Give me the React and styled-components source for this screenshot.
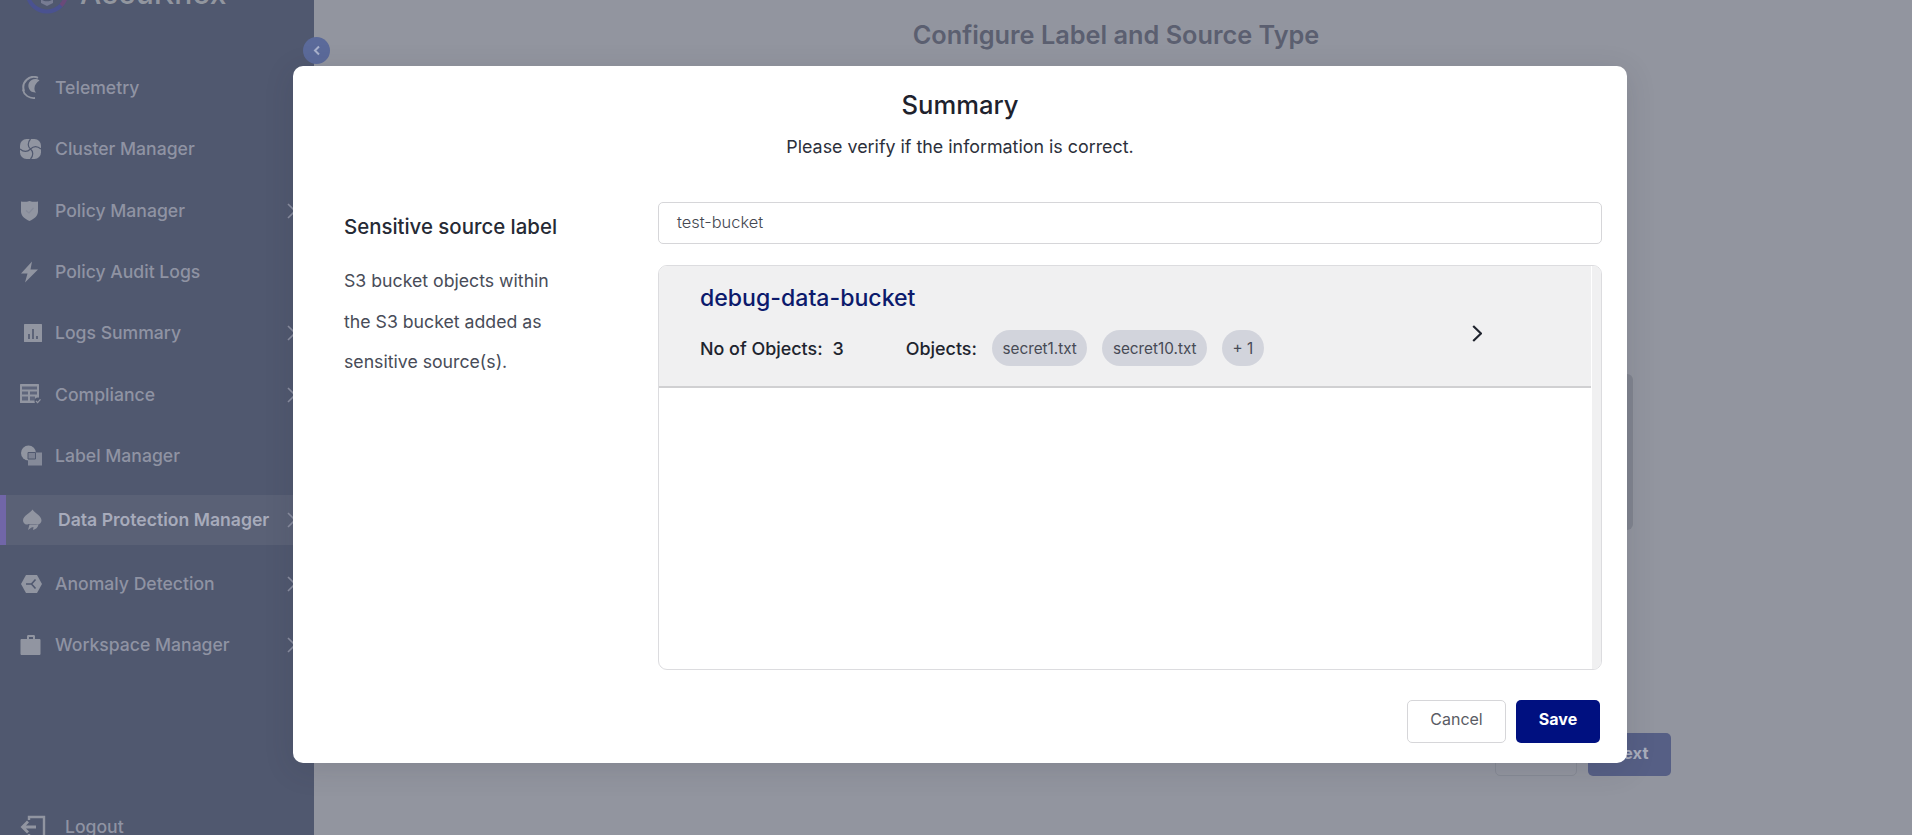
import React from "react";
import styled, { createGlobalStyle } from "styled-components";

const Global = createGlobalStyle`
  html, body { margin: 0; padding: 0; height: 100%; overflow: hidden; }
  body { font-family: Inter, "Noto Sans", sans-serif; background: #92959f; }
  * { box-sizing: border-box; }
`;

const Page = styled.div`
  display: flex;
  width: 100%;
  height: 835px;
  overflow: hidden;
  position: relative;
`;

const Sidebar = styled.aside`
  position: relative;
  flex: 0 0 314px;
  height: 835px;
  background: #50586f;
  display: flex;
  flex-direction: column;
  overflow: hidden;
`;

const Logo = styled.div`
  height: 57.4px;
  display: flex;
  align-items: flex-start;
  padding-left: 25px;
  overflow: hidden;
  flex: none;
`;

const LogoMark = styled.svg`
  width: 44px;
  height: 44px;
  flex: none;
  margin-top: -29px;
`;

const LogoText = styled.span`
  margin: -25px 0 0 11px;
  font-size: 30px;
  line-height: 36px;
  font-weight: 500;
  color: #92969f;
`;

const Row = styled.div`
  display: flex;
  align-items: center;
  flex: none;
  height: ${(p) => (p.$active ? "50px" : "61.3px")};
  margin: ${(p) => (p.$active ? "8.4px 0" : "0")};
  margin-top: ${(p) => (p.$bottom ? "121px" : undefined)};
  padding-left: ${(p) => (p.$active ? "14px" : "19px")};
  padding-right: 18px;
  background: ${(p) => (p.$active ? "#5a6176" : "transparent")};
  border-left: ${(p) => (p.$active ? "6px solid #7166a8" : "none")};
  color: ${(p) => (p.$active ? "#a7abbb" : "#8f93a3")};
`;

const Icon = styled.svg`
  width: 24px;
  height: 24px;
  flex: none;
  fill: #9195a1;
`;

const WideIcon = styled(Icon)`
  width: 27px;
`;

const Label = styled.span`
  font-size: 17.6px;
  line-height: 24px;
  font-weight: ${(p) => (p.$active ? 600 : 500)};
  margin-left: ${(p) => (p.$wide ? "19px" : p.$active ? "14px" : "12px")};
  white-space: nowrap;
`;

const Chevron = styled.svg`
  width: 9px;
  height: 16px;
  margin-left: auto;
  flex: none;
  fill: none;
  stroke: #8a8ea0;
  stroke-width: 1.6;
`;

const Collapse = styled.button`
  position: absolute;
  left: 303px;
  top: 37px;
  width: 27px;
  height: 27px;
  border: 0;
  padding: 0;
  border-radius: 50%;
  background: #5b6a9a;
  display: flex;
  align-items: center;
  justify-content: center;
  z-index: 2;
`;

const Main = styled.main`
  flex: 1;
  display: flex;
  flex-direction: column;
  background: #92959f;
`;

const PageTitle = styled.h1`
  margin: 20px 0 0;
  padding-left: 6px;
  font-size: 25.3px;
  line-height: 30px;
  font-weight: 600;
  color: #5b5f70;
  text-align: center;
`;

const Backdrop = styled.div`
  margin: 324px 279px 0 0;
  height: 156px;
  display: flex;
  justify-content: flex-end;
`;

const BehindCard = styled.div`
  width: 40px;
  background: #80848f;
  border-radius: 0 6px 6px 0;
`;

const Steps = styled.div`
  margin-top: 203px;
  padding-right: 241px;
  display: flex;
  justify-content: flex-end;
  gap: 11px;
`;

const StepBack = styled.div`
  width: 82px;
  height: 43px;
  border: 1px solid #868a95;
  border-radius: 5px;
`;

const StepNext = styled.div`
  width: 83px;
  height: 43px;
  padding-bottom: 4px;
  border-radius: 5px;
  background: #565f85;
  color: #a9adbc;
  font-size: 16.5px;
  font-weight: 700;
  display: flex;
  align-items: center;
  justify-content: center;
`;

const Overlay = styled.div`
  position: absolute;
  inset: 0;
  z-index: 5;
  padding: 66px 0 0 293px;
`;

const Modal = styled.section`
  width: 1334px;
  height: 697px;
  background: #fff;
  border-radius: 10px;
  box-shadow: 0 6px 30px rgba(40, 44, 60, 0.14);
  padding-top: 24px;
  display: flex;
  flex-direction: column;
`;

const ModalHead = styled.header`
  text-align: center;
`;

const ModalTitle = styled.h2`
  margin: 0;
  font-size: 25.6px;
  line-height: 30px;
  font-weight: 500;
  color: #1e222d;
`;

const ModalSub = styled.p`
  margin: 15px 0 0;
  font-size: 17.85px;
  line-height: 24px;
  color: #2c303b;
`;

const ModalBody = styled.div`
  margin-top: 43px;
  padding-right: 25px;
  display: grid;
  grid-template-columns: 365px 944px;
`;

const Intro = styled.div`
  padding: 10px 0 0 51px;
`;

const IntroTitle = styled.h3`
  margin: 0;
  font-size: 20.4px;
  line-height: 30px;
  font-weight: 500;
  color: #262a35;
`;

const IntroText = styled.p`
  margin: 19px 0 0;
  width: 215px;
  font-size: 17.7px;
  line-height: 40.7px;
  font-weight: 400;
  color: #484c58;
`;

const Fields = styled.div`
  display: flex;
  flex-direction: column;
  gap: 21px;
`;

const TextField = styled.div`
  height: 42px;
  padding: 0 0 2px 18px;
  border: 1.5px solid #d6d6d9;
  border-radius: 5px;
  display: flex;
  align-items: center;
  font-size: 16.4px;
  font-weight: 300;
  color: #454852;
`;

const ListBox = styled.div`
  height: 405px;
  border: 1px solid #dcdcdf;
  border-radius: 9px;
  display: flex;
  overflow: hidden;
`;

const List = styled.div`
  flex: 1;
`;

const Track = styled.div`
  width: 9px;
  margin-left: 1px;
  background: #f0f0f1;
`;

const Item = styled.div`
  height: 122px;
  background: #f0f0f1;
  border-bottom: 2px solid #d0d0d2;
  padding: 17px 108px 0 41px;
  display: flex;
`;

const ItemInfo = styled.div`
  flex: 1;
`;

const ItemName = styled.div`
  font-size: 23.1px;
  line-height: 30px;
  font-weight: 500;
  color: #0c1a6c;
`;

const Meta = styled.div`
  margin-top: 17px;
  height: 36px;
  display: flex;
  align-items: center;
  font-size: 17.9px;
  font-weight: 500;
  color: #20242e;
`;

const MetaValue = styled.span`
  margin-left: 10px;
  margin-right: 62px;
`;

const Chips = styled.div`
  display: flex;
  gap: 15px;
  margin-left: 15px;
`;

const Chip = styled.span`
  height: 36px;
  padding: 0 10.500px;
  border-radius: 18px;
  background: #d2d4dc;
  display: flex;
  align-items: center;
  font-size: 15.3px;
  font-weight: 400;
  color: #474a55;
`;

const ItemArrow = styled.svg`
  width: 10px;
  height: 17px;
  flex: none;
  margin: 42px 1px 0 -1px;
  fill: none;
  stroke: #20242e;
  stroke-width: 2.2;
`;

const ModalFoot = styled.footer`
  margin-top: 30px;
  padding-right: 27px;
  display: flex;
  justify-content: flex-end;
  gap: 10px;
`;

const Button = styled.button`
  height: 43px;
  width: ${(p) => (p.$primary ? "84px" : "99px")};
  padding: 0 0 5px;
  border-radius: 5px;
  border: ${(p) => (p.$primary ? "0" : "1px solid #d6d6d9")};
  background: ${(p) => (p.$primary ? "#001080" : "#fff")};
  color: ${(p) => (p.$primary ? "#fff" : "#5a5c64")};
  font-family: inherit;
  font-size: 16px;
  font-weight: ${(p) => (p.$primary ? 700 : 400)};
`;

const icons = {
  telemetry: (
    <>
      <path d="M20.500 4.500A6.800 6.800 0 1 0 17 16.500c-1-1-1.700-2.500-1.500-4.500.1-3 2-5.500 5-7.500Z" />
      <path d="M19 1.800A10.500 10.500 0 0 0 5 15" fill="none" stroke="#9195a1" strokeWidth="2" />
      <path d="M3.800 13.500A11 11 0 0 0 16 22" fill="none" stroke="#9195a1" strokeWidth="1.800" />
    </>
  ),
  cluster: (
    <>
      <rect x="1" y="2" width="21" height="20" rx="6.500" />
      <path d="M11.500 12C8.500 9.500 8.500 5.500 11.500 2M11.500 12c3-3 7-3 10.500 0M11.500 12c3 2.500 3 6.500 0 10M11.500 12c-3 3-7 3-10.500 0" fill="none" stroke="#50586f" strokeWidth="1.200" />
    </>
  ),
  shield: (
    <>
      <path d="M2 2.500c3 .5 5.500.5 8.500-.5 3 1 6 1 8.500.5v10c0 4.500-4 7.500-8.500 9.500C6 20 2 17 2 12.500Z" />
      <path d="M7 11.500l3 2.500 4.500-5" fill="none" stroke="#858a99" strokeWidth="1.200" />
    </>
  ),
  bolt: <path d="M13 1.500 2 13.500h6.500L6 22.500 19 9.500h-7.500Z" />,
  bars: (
    <>
      <rect x="5" y="3" width="18" height="18" rx="0.500" />
      <path d="M10 18v-5M14 18V8M18 18v-3" stroke="#50586f" strokeWidth="1.600" fill="none" />
    </>
  ),
  table: (
    <>
      <rect x="1" y="1" width="19" height="19" rx="0.500" />
      <path d="M3 3.500h15v3H3ZM3 8.500h6v3H3ZM11 8.500h7v3h-7ZM3 13.500h6v4H3ZM11 13.500h5v4h-5Z" fill="#5f667c" />
      <circle cx="19" cy="18" r="3.500" fill="#50586f" />
      <path d="M17 18l1.600 1.600 2.900-3.200" fill="none" stroke="#9195a1" strokeWidth="1.300" />
    </>
  ),
  label: (
    <>
      <circle cx="9.500" cy="9" r="7.500" />
      <rect x="9" y="8.500" width="14" height="13" fill="#858a99" />
      <path d="M9 8.500h7.500V15H9Z" fill="#7c8192" stroke="#50586f" strokeWidth="1" />
    </>
  ),
  spade: (
    <>
      <path d="M12.500 1.500c2 3.500 9 6 9 11 0 3-3 4.800-5.800 3.500H8.500C6 17.500 3 15.500 3 12.500c0-5 7.500-7.500 9.500-11Z" />
      <path d="M8 22l1.500-5.500h9c-.5 3-3 5-5.500 5.500l.5-3-2 .5Z" />
    </>
  ),
  hex: (
    <>
      <path d="M7 3h11l5 9-5 9H7l-5-9Z" />
      <path d="M12.500 12l4-4.500M12.500 12l4 4.500M12.500 12H7" stroke="#50586f" strokeWidth="1.600" fill="none" />
    </>
  ),
  briefcase: <path d="M8 3.500c0-1 .5-1.500 1.500-1.500h5c1 0 1.500.5 1.500 1.500V6h4.500c.5 0 1 .5 1 1v14c0 .5-.5 1-1 1h-18c-.5 0-1-.5-1-1V7c0-.5.5-1 1-1H8Zm2 .5v2h4V4Z" />,
};

const nav = [
  { name: "Telemetry", icon: "telemetry" },
  { name: "Cluster Manager", icon: "cluster" },
  { name: "Policy Manager", icon: "shield", more: true },
  { name: "Policy Audit Logs", icon: "bolt" },
  { name: "Logs Summary", icon: "bars", more: true },
  { name: "Compliance", icon: "table", more: true },
  { name: "Label Manager", icon: "label" },
  { name: "Data Protection Manager", icon: "spade", more: true, active: true },
  { name: "Anomaly Detection", icon: "hex", more: true },
  { name: "Workspace Manager", icon: "briefcase", more: true },
];

const App = () => (
  <Page>
    <Global />
    <Sidebar>
      <Logo>
        <LogoMark viewBox="0 0 44 44">
          <circle cx="22" cy="21" r="19.500" fill="none" stroke="#4a5290" strokeWidth="4" />
          <path d="M41.500 21A19.500 19.500 0 0 1 36 34.500" fill="none" stroke="#6a4a78" strokeWidth="4" />
          <path d="M16 28c2 3 10 3 12 0v4l-6 3-6-3Z" fill="#777c93" />
        </LogoMark>
        <LogoText>AccuKnox</LogoText>
      </Logo>
      {nav.map((n) => (
        <Row key={n.name} $active={n.active}>
          <Icon viewBox="0 0 24 24">{icons[n.icon]}</Icon>
          <Label $active={n.active}>{n.name}</Label>
          {n.more && (
            <Chevron viewBox="0 0 9 16">
              <path d="M1 1l7 7-7 7" />
            </Chevron>
          )}
        </Row>
      ))}
      <Row $bottom>
        <WideIcon viewBox="0 0 27 24">
          <path d="M10 5V2h15v20H10v-3" fill="none" stroke="#9195a1" strokeWidth="2.400" />
          <path d="M17 12H5M9 6.500 3.500 12 9 17.500" fill="none" stroke="#9195a1" strokeWidth="2.800" />
        </WideIcon>
        <Label $wide>Logout</Label>
      </Row>
    </Sidebar>
    <Collapse aria-label="Collapse">
      <svg width="8" height="11" viewBox="0 0 8 11" fill="none" stroke="#a9b1cc" strokeWidth="2">
        <path d="M6 1.500 2 5.500l4 4" />
      </svg>
    </Collapse>
    <Main>
      <PageTitle>Configure Label and Source Type</PageTitle>
      <Backdrop>
        <BehindCard />
      </Backdrop>
      <Steps>
        <StepBack />
        <StepNext>Next</StepNext>
      </Steps>
    </Main>
    <Overlay>
      <Modal>
        <ModalHead>
          <ModalTitle>Summary</ModalTitle>
          <ModalSub>Please verify if the information is correct.</ModalSub>
        </ModalHead>
        <ModalBody>
          <Intro>
            <IntroTitle>Sensitive source label</IntroTitle>
            <IntroText>S3 bucket objects within the S3 bucket added as sensitive source(s).</IntroText>
          </Intro>
          <Fields>
            <TextField>test-bucket</TextField>
            <ListBox>
              <List>
                <Item>
                  <ItemInfo>
                    <ItemName>debug-data-bucket</ItemName>
                    <Meta>
                      <span>No of Objects:</span>
                      <MetaValue>3</MetaValue>
                      <span>Objects:</span>
                      <Chips>
                        <Chip>secret1.txt</Chip>
                        <Chip>secret10.txt</Chip>
                        <Chip>+ 1</Chip>
                      </Chips>
                    </Meta>
                  </ItemInfo>
                  <ItemArrow viewBox="0 0 10 17">
                    <path d="M1.200 1 9 8.500 1.200 16" />
                  </ItemArrow>
                </Item>
              </List>
              <Track />
            </ListBox>
          </Fields>
        </ModalBody>
        <ModalFoot>
          <Button>Cancel</Button>
          <Button $primary>Save</Button>
        </ModalFoot>
      </Modal>
    </Overlay>
  </Page>
);

export default App;
